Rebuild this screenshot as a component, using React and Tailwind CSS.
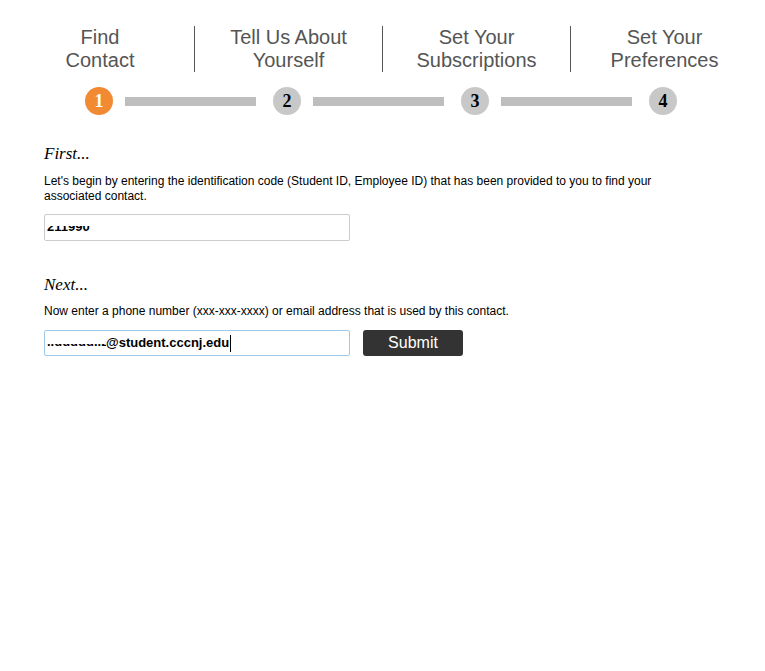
const steps = [
  ['Find', 'Contact'],
  ['Tell Us About', 'Yourself'],
  ['Set Your', 'Subscriptions'],
  ['Set Your', 'Preferences'],
];

function StepDot({ n, active }) {
  return (
    <div
      className={`w-7 h-7 shrink-0 rounded-full flex items-center justify-center text-[18px] font-bold leading-none ${
        active ? 'bg-[#f28a33] text-white' : 'bg-[#c8c8c8] text-black'
      }`}
      style={{ fontFamily: '"Liberation Serif", serif' }}
    >
      {n}
    </div>
  );
}

export default function App() {
  return (
    <div className="w-[765px] h-[671px] bg-white overflow-hidden" style={{ fontFamily: '"Liberation Sans", Arial, sans-serif' }}>
      {/* step titles */}
      <div className="grid grid-cols-4 w-[752px] ml-[6px] mt-[26px]">
        {steps.map((s, i) => (
          <div
            key={i}
            className={`h-[46px] text-center text-[20px] leading-[23px] text-[#555] ${i > 0 ? 'border-l border-[#555]' : ''}`}
          >
            <div>{s[0]}</div>
            <div>{s[1]}</div>
          </div>
        ))}
      </div>

      {/* progress */}
      <div className="flex items-center ml-[85px] mt-[15px]">
        {[1, 2, 3, 4].map((n) => (
          <div key={n} className="flex items-center">
            <StepDot n={n} active={n === 1} />
            {n < 4 && <div className="ml-[12px] mr-[17px] w-[131px] h-[9px] bg-[#bebebe]" />}
          </div>
        ))}
      </div>

      {/* form */}
      <div className="ml-[44px] mt-[29px] max-w-[640px] text-black">
        <h2 className="italic text-[17px] leading-[20px]" style={{ fontFamily: '"Liberation Serif", serif' }}>
          First...
        </h2>
        <p className="mt-[10px] text-[12px] leading-[15px]">
          Let's begin by entering the identification code (Student ID, Employee ID) that has been provided to you to find your associated contact.
        </p>
        <div className="mt-[10px] w-[306px] h-[27px] border border-[#cccccc] rounded-[2px] pl-[2px] pt-[11px]">
          <div className="h-[6px] overflow-hidden">
            <div className="text-[13px] font-bold leading-[13px] -mt-[6px]">211990</div>
          </div>
        </div>

        <h2 className="mt-[34px] italic text-[17px] leading-[20px]" style={{ fontFamily: '"Liberation Serif", serif' }}>
          Next...
        </h2>
        <p className="mt-[9px] text-[12px] leading-[15px]">
          Now enter a phone number (xxx-xxx-xxxx) or email address that is used by this contact.
        </p>
        <div className="mt-[11px] flex items-center gap-[13px]">
          <div className="w-[306px] h-[26px] border border-[#9fc9ea] rounded-[2px] flex items-center pl-[2px] text-[13px] font-bold">
            <span className="inline-block w-[59px] h-[5px] overflow-hidden self-center mt-[6px] whitespace-nowrap">
              <span className="block -mt-[10px] leading-[15px]">..uuuuu..z</span>
            </span>
            <span>@student.cccnj.edu</span>
            <span className="w-px h-[17px] bg-black ml-[1px]" />
          </div>
          <button className="w-[100px] h-[26px] bg-[#333] text-white text-[16px] rounded-[3px] leading-none">
            Submit
          </button>
        </div>
      </div>
    </div>
  );
}
